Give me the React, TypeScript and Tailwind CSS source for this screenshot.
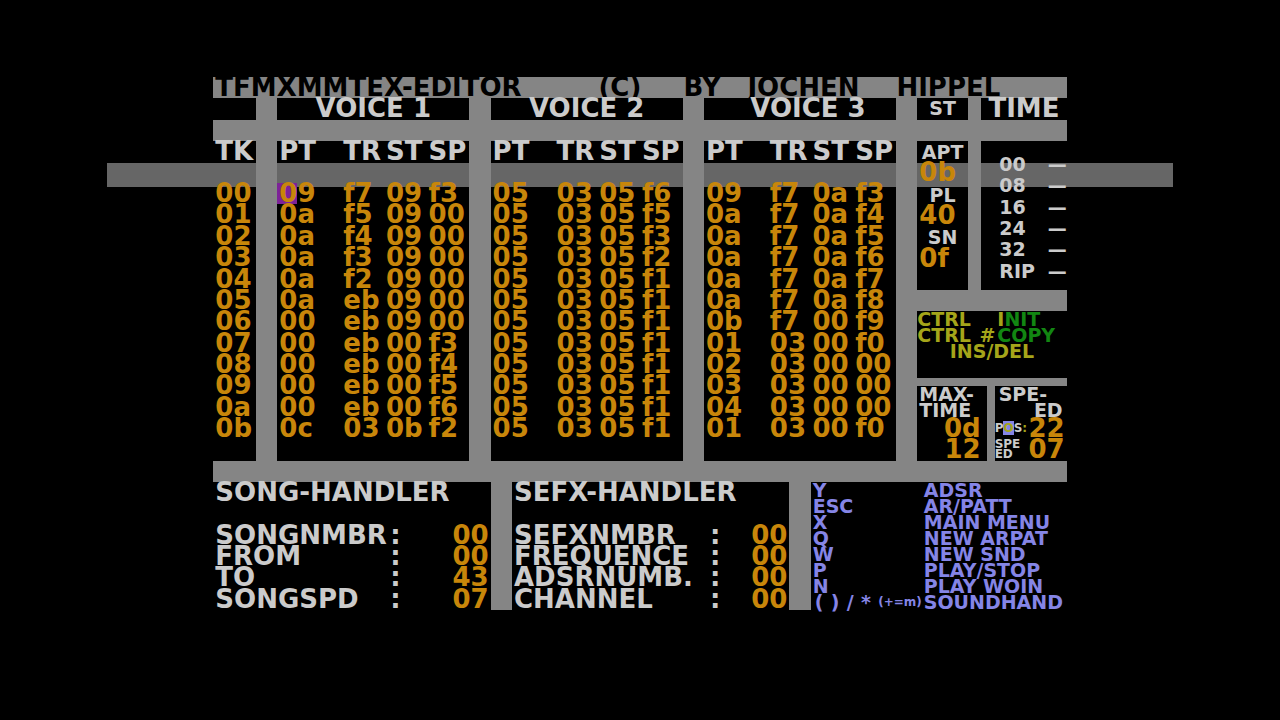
import clsx from 'clsx';

type VoiceRow = [string, string, string, string];

interface Track {
  tk: string;
  voices: VoiceRow[];
}

const tracks: Track[] = [
  { tk: '00', voices: [['09', 'f7', '09', 'f3'], ['05', '03', '05', 'f6'], ['09', 'f7', '0a', 'f3']] },
  { tk: '01', voices: [['0a', 'f5', '09', '00'], ['05', '03', '05', 'f5'], ['0a', 'f7', '0a', 'f4']] },
  { tk: '02', voices: [['0a', 'f4', '09', '00'], ['05', '03', '05', 'f3'], ['0a', 'f7', '0a', 'f5']] },
  { tk: '03', voices: [['0a', 'f3', '09', '00'], ['05', '03', '05', 'f2'], ['0a', 'f7', '0a', 'f6']] },
  { tk: '04', voices: [['0a', 'f2', '09', '00'], ['05', '03', '05', 'f1'], ['0a', 'f7', '0a', 'f7']] },
  { tk: '05', voices: [['0a', 'eb', '09', '00'], ['05', '03', '05', 'f1'], ['0a', 'f7', '0a', 'f8']] },
  { tk: '06', voices: [['00', 'eb', '09', '00'], ['05', '03', '05', 'f1'], ['0b', 'f7', '00', 'f9']] },
  { tk: '07', voices: [['00', 'eb', '00', 'f3'], ['05', '03', '05', 'f1'], ['01', '03', '00', 'f0']] },
  { tk: '08', voices: [['00', 'eb', '00', 'f4'], ['05', '03', '05', 'f1'], ['02', '03', '00', '00']] },
  { tk: '09', voices: [['00', 'eb', '00', 'f5'], ['05', '03', '05', 'f1'], ['03', '03', '00', '00']] },
  { tk: '0a', voices: [['00', 'eb', '00', 'f6'], ['05', '03', '05', 'f1'], ['04', '03', '00', '00']] },
  { tk: '0b', voices: [['0c', '03', '0b', 'f2'], ['05', '03', '05', 'f1'], ['01', '03', '00', 'f0']] },
];

const songFields = [
  { label: 'SONGNMBR', value: '00' },
  { label: 'FROM', value: '00' },
  { label: 'TO', value: '43' },
  { label: 'SONGSPD', value: '07' },
];

const sefxFields = [
  { label: 'SEFXNMBR', value: '00' },
  { label: 'FREQUENCE', value: '00' },
  { label: 'ADSRNUMB.', value: '00' },
  { label: 'CHANNEL', value: '00' },
];

const status = [
  { label: 'APT', value: '0b' },
  { label: 'PL', value: '40' },
  { label: 'SN', value: '0f' },
];

const times = ['00', '08', '16', '24', '32', 'RIP'];

const keys = [
  { key: 'Y', action: 'ADSR' },
  { key: 'ESC', action: 'AR/PATT' },
  { key: 'X', action: 'MAIN MENU' },
  { key: 'Q', action: 'NEW ARPAT' },
  { key: 'W', action: 'NEW SND' },
  { key: 'P', action: 'PLAY/STOP' },
  { key: 'N', action: 'PLAY WOIN' },
];

const hex = 'text-[26px] leading-[20px] text-[#c8860a]';
const small = 'text-[19px] leading-4';

// Grey divider between panels
const Bar = ({ className }: { className?: string }) => <div className={clsx('bg-[#858585]', className)} />;

const BarCell = ({ rows }: { rows: number }) => <td rowSpan={rows} className="bg-[#858585] p-0" />;

const VoiceHead = () => (
  <>
    <BarCell rows={2} />
    <th colSpan={3} className="p-0 pl-[2px]">PT</th>
    <th colSpan={2} className="p-0 pl-[2px]">TR</th>
    <th colSpan={2} className="p-0 pl-[2px]">ST</th>
    <th colSpan={2} className="p-0 pl-[2px]">SP</th>
  </>
);

interface VoiceCellsProps {
  cells: VoiceRow;
  first: boolean;
  cursor: boolean;
}

const VoiceCells = ({ cells, first, cursor }: VoiceCellsProps) => (
  <>
    {first && <BarCell rows={13} />}
    {cells.map((cell, i) => (
      <td key={i} colSpan={i === 0 ? 3 : 2} className="p-0 pl-[2px]">
        {cursor && i === 0 ? (
          <>
            <span className="-ml-[2px] inline-block h-[21px] bg-[#7d2298] pl-[2px] align-top">{cell[0]}</span>
            {cell[1]}
          </>
        ) : (
          cell
        )}
      </td>
    ))}
  </>
);

const TrackTable = () => (
  <table className="h-80 w-full table-fixed border-collapse">
    <colgroup>
      {Array.from({ length: 33 }, (_, i) => (
        <col key={i} />
      ))}
    </colgroup>
    <thead>
      <tr className="h-[21px] text-left align-top">
        <th colSpan={2} className="p-0 pl-[2px]">TK</th>
        <VoiceHead />
        <VoiceHead />
        <VoiceHead />
        <BarCell rows={2} />
      </tr>
      <tr className="h-[21px]">
        <td colSpan={2} className="p-0" />
      </tr>
    </thead>
    <tbody>
      {tracks.map((track, row) => (
        <tr key={track.tk} className={clsx('h-[21px] align-top', hex)}>
          <td colSpan={2} className="p-0 pl-[2px]">{track.tk}</td>
          {track.voices.map((cells, voice) => (
            <VoiceCells key={voice} cells={cells} first={row === 0} cursor={row === 0 && voice === 0} />
          ))}
          {row === 0 && <BarCell rows={13} />}
        </tr>
      ))}
      <tr className="h-[21px]">
        <td colSpan={2} className="p-0" />
      </tr>
    </tbody>
  </table>
);

interface HandlerProps {
  title: string;
  fields: { label: string; value: string }[];
  columns: string;
}

const Handler = ({ title, fields, columns }: HandlerProps) => (
  <section className="grid grid-rows-6 pl-[2px]">
    <h2 className="row-span-2">{title}</h2>
    {fields.map(field => (
      <div key={field.label} className={clsx('grid', columns)}>
        <span className="min-w-0">{field.label}</span>
        <span className="text-center">:</span>
        <span className={clsx('pr-[2px] text-right', hex)}>{field.value}</span>
      </div>
    ))}
  </section>
);

const SidePanel = () => (
  <aside className="flex h-80 flex-col">
    <div className="grid h-[149px] grid-cols-[19fr_5fr_32fr]">
      <div className="grid h-32 min-w-0 grid-rows-6">
        {status.map(item => (
          <div key={item.label} className="row-span-2 grid grid-rows-2">
            <span className="text-center text-[19px] leading-[22px]">{item.label}</span>
            <span className={clsx('pl-[2px]', hex)}>{item.value}</span>
          </div>
        ))}
      </div>
      <Bar />
      <div className="min-w-0 pt-3 pl-[18px]">
        <div className="grid h-32 grid-rows-6 text-[19px] leading-[22px]">
          {times.map(time => (
            <div key={time} className="flex justify-between">
              <span>{time}</span>
              <span>—</span>
            </div>
          ))}
        </div>
      </div>
    </div>
    <Bar className="h-[21px]" />
    <div className={clsx('flex-1 text-[#a5a51a]', small)}>
      <div className="flex">
        <span className="w-20">CTRL</span>
        <span>I<span className="text-[#128612]">NIT</span></span>
      </div>
      <div className="flex">
        <span className="flex w-20 justify-between pr-[2px]"><span>CTRL</span><span>#</span></span>
        <span className="text-[#128612]">COPY</span>
      </div>
      <div className="text-center">INS/DEL</div>
    </div>
    <Bar className="h-2" />
    <div className="grid h-[75px] grid-cols-[26fr_3fr_27fr]">
      <div className={clsx('min-w-0 px-[2px]', small)}>
        <div>MAX-</div>
        <div>TIME</div>
        <div className={clsx('h-[21px] pr-1 text-right', hex)}>0d</div>
        <div className={clsx('h-[21px] pr-1 text-right', hex)}>12</div>
      </div>
      <Bar />
      <div className={clsx('min-w-0 pr-[2px]', small)}>
        <div className="pl-1">SPE-</div>
        <div className="pr-[2px] text-right">ED</div>
        <div className="flex h-[21px] justify-between">
          <span className="text-xs leading-5">P<span className="bg-[#8585e6] text-[#a5a51a]">O</span>S<span className="text-[#a5a51a]">:</span></span>
          <span className={hex}>22</span>
        </div>
        <div className="flex h-[21px] justify-between">
          <span className="text-xs leading-[10px]">SPE<br />ED</span>
          <span className={hex}>07</span>
        </div>
      </div>
    </div>
  </aside>
);

export default function App() {
  return (
    <div className="min-h-screen bg-black pt-[77px] font-['DejaVu_Sans',sans-serif] text-[26px] leading-[20px] font-bold text-[#cbcbcb]">
      <main className="relative isolate mx-auto w-2/3 whitespace-nowrap">
        {/* Raster strip running behind the panels */}
        <div className="absolute inset-x-[-12.5%] top-[86px] -z-10 h-6 bg-[#666666]" />

        <header className="grid h-16 grid-rows-3">
          <h1 className="grid grid-cols-[18fr_4fr_3fr_7fr_8fr] bg-[#858585] pl-[2px] text-black">
            <span className="min-w-0">TFMXMMTEX-EDITOR</span>
            <span className="min-w-0">(C)</span>
            <span className="min-w-0">BY</span>
            <span className="min-w-0">JOCHEN</span>
            <span className="min-w-0">HIPPEL</span>
          </h1>
          <div className="grid grid-cols-[2fr_1fr_9fr_1fr_9fr_1fr_9fr_1fr_7fr] text-center">
            <div />
            <Bar />
            <h2 className="min-w-0">VOICE 1</h2>
            <Bar />
            <h2 className="min-w-0">VOICE 2</h2>
            <Bar />
            <h2 className="min-w-0 pl-4">VOICE 3</h2>
            <Bar />
            <div className="grid min-w-0 grid-cols-[19fr_5fr_32fr]">
              <h2 className="min-w-0 text-[19px]">ST</h2>
              <Bar />
              <h2 className="min-w-0">TIME</h2>
            </div>
          </div>
          <Bar />
        </header>

        <div className="grid grid-cols-[33fr_7fr]">
          <TrackTable />
          <SidePanel />
        </div>

        <Bar className="h-[21px]" />

        <footer className="grid h-32 grid-cols-[13fr_1fr_13fr_1fr_12fr]">
          <Handler title="SONG-HANDLER" fields={songFields} columns="grid-cols-[8fr_1fr_4fr]" />
          <Bar />
          <Handler title="SEFX-HANDLER" fields={sefxFields} columns="grid-cols-[9fr_1fr_3fr]" />
          <Bar />
          <dl className={clsx('min-w-0 pl-[2px] text-[#8585e6]', small)}>
            {keys.map(item => (
              <div key={item.key} className="grid grid-cols-[7fr_9fr]">
                <dt>{item.key}</dt>
                <dd className="min-w-0">{item.action}</dd>
              </div>
            ))}
            <div className="grid grid-cols-[7fr_9fr]">
              <dt className="flex min-w-0 justify-between px-[2px]">
                <span>(</span>
                <span>)</span>
                <span>/</span>
                <span>*</span>
                <span className="text-xs leading-4">(+=m)</span>
              </dt>
              <dd className="min-w-0">SOUNDHAND</dd>
            </div>
          </dl>
        </footer>
      </main>
    </div>
  );
}
